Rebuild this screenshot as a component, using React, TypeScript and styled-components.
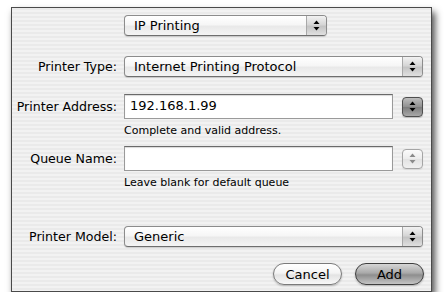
import React from "react";
import styled, {createGlobalStyle, css} from "styled-components";

const GlobalStyle = createGlobalStyle`
    html, body {
        margin: 0;
        padding: 0;
        background: #ffffff;
    }

    body {
        font-family: "DejaVu Sans", "Liberation Sans", sans-serif;
        color: #000;
    }
`

const Arrows = (props: { color?: string }) => (
    <svg width="7" height="11" viewBox="0 0 7 11">
        <polygon points="3.5,0.5 6.5,4 0.5,4" fill={props.color || "#000"}/>
        <polygon points="0.5,7 6.5,7 3.5,10.5" fill={props.color || "#000"}/>
    </svg>
)

type PopupProps = {
    value: string
}

const Popup = (props: PopupProps) => {
    return (
        <StyledPopup>
            <PopupText>{props.value}</PopupText>
            <PopupArrow>
                <Arrows/>
            </PopupArrow>
        </StyledPopup>
    );
};

const Stepper = (props: { disabled?: boolean }) => (
    <StyledStepper $disabled={props.disabled}>
        <Arrows color={props.disabled ? "#8a8a8a" : "#000"}/>
    </StyledStepper>
)

export default function App() {
    return (
        <>
            <GlobalStyle/>
            <Window>
                <Row $top={7}>
                    <span/>
                    <NarrowPopup>
                        <Popup value="IP Printing"/>
                    </NarrowPopup>
                </Row>

                <Row $top={20}>
                    <Label>Printer Type:</Label>
                    <Popup value="Internet Printing Protocol"/>
                </Row>

                <Row $top={17}>
                    <Label>Printer Address:</Label>
                    <FieldLine>
                        <TextField>192.168.1.99</TextField>
                        <Stepper/>
                    </FieldLine>
                </Row>
                <Row $top={5}>
                    <span/>
                    <Hint>Complete and valid address.</Hint>
                </Row>

                <Row $top={8}>
                    <Label>Queue Name:</Label>
                    <FieldLine>
                        <TextField/>
                        <Stepper disabled/>
                    </FieldLine>
                </Row>
                <Row $top={5}>
                    <span/>
                    <Hint>Leave blank for default queue</Hint>
                </Row>

                <Row $top={36}>
                    <Label>Printer Model:</Label>
                    <Popup value="Generic"/>
                </Row>

                <Buttons>
                    <PillButton>Cancel</PillButton>
                    <PillButton $primary>Add</PillButton>
                </Buttons>
            </Window>
        </>
    );
}

const Window = styled.div`
    box-sizing: border-box;
    width: 421px;
    height: 285px;
    margin: 7px 0 0 11px;
    padding: 0 8px 0 0;
    display: flex;
    flex-direction: column;
    border: 1px solid #4a4a4a;
    background: repeating-linear-gradient(to bottom, #eaeaea 0 2px, #f2f2f2 2px 4px);
    box-shadow: 3px 5px 7px rgba(0, 0, 0, 0.7);
`

const Row = styled.div<{ $top: number }>`
    display: grid;
    grid-template-columns: 105px 1fr;
    column-gap: 7px;
    align-items: center;
    margin-top: ${props => props.$top}px;
`

const Label = styled.span`
    text-align: right;
    font-size: 12.6px;
    white-space: nowrap;
`

const NarrowPopup = styled.div`
    width: 203px;
`

const StyledPopup = styled.div`
    box-sizing: border-box;
    height: 21px;
    display: flex;
    align-items: stretch;
    border: 1px solid #8c8c8c;
    border-bottom-color: #6e6e6e;
    border-radius: 4px;
    overflow: hidden;
    background: linear-gradient(to bottom, #ffffff 0%, #f6f6f6 45%, #e9e9e9 55%, #f4f4f4 100%);
    box-shadow: 0 1px 1px rgba(0, 0, 0, 0.15);
`

const PopupText = styled.span`
    flex: 1;
    padding-left: 9px;
    font-size: 13px;
    line-height: 19px;
    white-space: nowrap;
`

const PopupArrow = styled.span`
    width: 19px;
    display: flex;
    align-items: center;
    justify-content: center;
    border-left: 1px solid #a8a8a8;
    background: linear-gradient(to bottom, #f2f2f2 0%, #d6d6d6 45%, #c4c4c4 55%, #e0e0e0 100%);
`

const FieldLine = styled.div`
    display: flex;
    align-items: center;
    justify-content: space-between;
`

const TextField = styled.div`
    box-sizing: border-box;
    width: 269px;
    height: 25px;
    padding: 3px 0 0 5px;
    font-size: 13px;
    line-height: 16px;
    background: #ffffff;
    border: 1px solid #9a9a9a;
    border-top-color: #6a6a6a;
    box-shadow: inset 0 1px 1px rgba(0, 0, 0, 0.15);
`

const StyledStepper = styled.div<{ $disabled?: boolean }>`
    box-sizing: border-box;
    width: 21px;
    height: 20px;
    display: flex;
    align-items: center;
    justify-content: center;
    border-radius: 4px;
    border: 1px solid #4e4e4e;
    background: linear-gradient(to bottom, #bdbdbd 0%, #8f8f8f 50%, #7c7c7c 51%, #a8a8a8 100%);
    box-shadow: 0 1px 1px rgba(0, 0, 0, 0.2);
    ${props => props.$disabled && css`
        border-color: #a5a5a5;
        background: linear-gradient(to bottom, #fbfbfb 0%, #ececec 50%, #e2e2e2 51%, #f0f0f0 100%);
        box-shadow: 0 1px 1px rgba(0, 0, 0, 0.08);
    `}
`

const Hint = styled.span`
    font-size: 11px;
    line-height: 14px;
`

const Buttons = styled.div`
    display: flex;
    justify-content: flex-end;
    gap: 13px;
    margin: 16px -1px 0 0;
`

const PillButton = styled.div<{ $primary?: boolean }>`
    box-sizing: border-box;
    width: 69px;
    height: 22px;
    display: flex;
    align-items: center;
    justify-content: center;
    border-radius: 11px;
    font-size: 13px;
    border: 1px solid #7a7a7a;
    background: linear-gradient(to bottom, #ffffff 0%, #f4f4f4 45%, #e3e3e3 55%, #f8f8f8 100%);
    box-shadow: 0 1px 2px rgba(0, 0, 0, 0.25);
    ${props => props.$primary && css`
        border-color: #3e3e3e;
        background: linear-gradient(to bottom, #d6d6d6 0%, #a9a9a9 45%, #8e8e8e 55%, #c4c4c4 100%);
    `}
`
